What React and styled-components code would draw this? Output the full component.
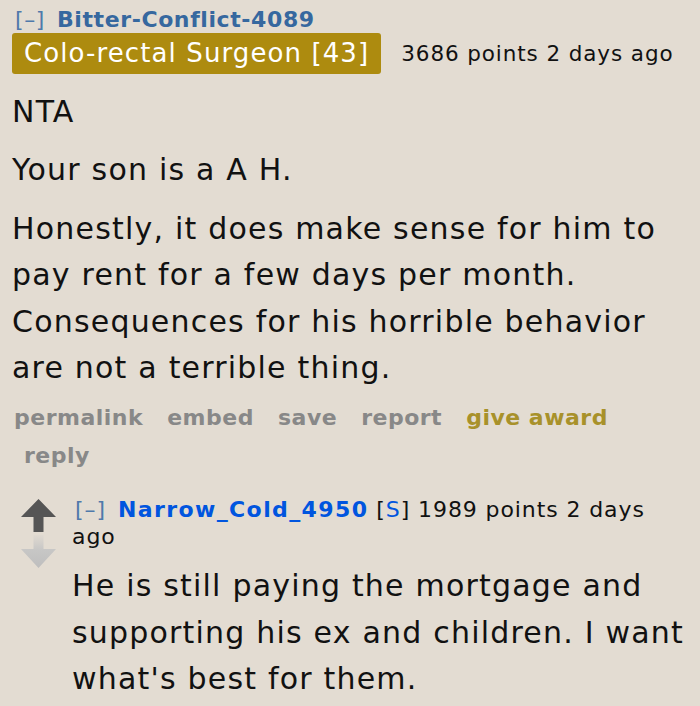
import React from 'react';
import styled, { createGlobalStyle } from 'styled-components';

const GlobalStyle = createGlobalStyle`
  body {
    margin: 0;
    background: #e3dcd2;
    font-family: "DejaVu Sans", Verdana, sans-serif;
    color: #111;
  }
`;

const Page = styled.div`
  width: 700px;
  height: 706px;
  overflow: hidden;
  padding: 7px 0 0 12px;
  box-sizing: border-box;
`;

const Tagline = styled.div`
  font-size: 22px;
  line-height: 26px;
  letter-spacing: 0.6px;
`;

const Expand = styled.span`
  color: #4f79ab;
  font-weight: normal;
  margin: 0 12px 0 3px;
`;

const Author = styled.span`
  font-weight: bold;
  color: ${(p) => (p.$submitter ? '#0055df' : '#36689f')};
  letter-spacing: ${(p) => (p.$submitter ? '1.4px' : '0.6px')};
`;

const FlairRow = styled.div`
  display: flex;
  align-items: center;
  gap: 20px;
`;

const Flair = styled.span`
  background: #ad8b0f;
  color: #fff;
  font-size: 26px;
  line-height: 41px;
  letter-spacing: 1.1px;
  padding: 0 12px;
  border-radius: 3px;
`;

const Meta = styled.span`
  font-size: 21.5px;
  letter-spacing: 0.9px;
  color: #111;
`;

const Body = styled.div`
  margin-top: 15px;
`;

const Para = styled.p`
  margin: 0 0 12px;
  font-size: 30px;
  line-height: 46.4px;
  letter-spacing: 1.2px;

  &:last-child {
    margin-bottom: 0;
  }
`;

const Buttons = styled.ul`
  list-style: none;
  margin: 8px 0 0;
  padding: 0 60px 0 2px;
  display: flex;
  flex-wrap: wrap;
  column-gap: 24px;
  font-size: 22px;
  line-height: 38px;
  font-weight: bold;
  letter-spacing: 0.5px;
`;

const Button = styled.li`
  color: ${(p) => (p.$award ? '#a8912a' : '#888')};
  padding-left: ${(p) => (p.$indent ? '10px' : '0')};
`;

const Child = styled.div`
  display: flex;
  gap: 16px;
  margin-top: 21px;
  margin-left: 9px;
`;

const MidCol = styled.div`
  display: flex;
  flex-direction: column;
  width: 35px;
  padding-top: 3px;
  flex-shrink: 0;
`;

const ChildEntry = styled.div`
  flex: 1;
`;

const ChildTagline = styled.div`
  font-size: 22px;
  line-height: 27px;
  letter-spacing: 0.9px;
  padding-right: 8px;
`;

const Submitter = styled.span`
  color: #0055df;
`;

const Score = styled.span`
  color: #111;
`;

const ChildBody = styled.div`
  margin-top: 13px;
`;

const Arrows = () => (
  <svg width="35" height="70" viewBox="0 0 35 70">
    <defs>
      <linearGradient id="downFade" x1="0" y1="0" x2="0" y2="1">
        <stop offset="0" stopColor="#c4c4c4" stopOpacity="0.1" />
        <stop offset="0.45" stopColor="#c4c4c4" stopOpacity="0.9" />
        <stop offset="1" stopColor="#bebebe" />
      </linearGradient>
    </defs>
    <polygon points="17.5,0 35,18 22.5,18 22.5,33 12.5,33 12.5,18 0,18" fill="#555" />
    <polygon points="12.5,36 22.5,36 22.5,50 35,50 17.5,69 0,50 12.5,50" fill="url(#downFade)" />
  </svg>
);

export default function App() {
  return (
    <Page>
      <GlobalStyle />
      <Tagline>
        <Expand>[–]</Expand>
        <Author>Bitter-Conflict-4089</Author>
      </Tagline>
      <FlairRow>
        <Flair>Colo-rectal Surgeon [43]</Flair>
        <Meta>3686 points 2 days ago</Meta>
      </FlairRow>
      <Body>
        <Para>NTA</Para>
        <Para>Your son is a A H.</Para>
        <Para>
          Honestly, it does make sense for him to pay rent for a few days per month.
          Consequences for his horrible behavior are not a terrible thing.
        </Para>
      </Body>
      <Buttons>
        <Button>permalink</Button>
        <Button>embed</Button>
        <Button>save</Button>
        <Button>report</Button>
        <Button $award>give award</Button>
        <Button $indent>reply</Button>
      </Buttons>
      <Child>
        <MidCol>
          <Arrows />
        </MidCol>
        <ChildEntry>
          <ChildTagline>
            <Expand>[–]</Expand>
            <Author $submitter>Narrow_Cold_4950</Author> <Score>[<Submitter>S</Submitter>]</Score>{' '}
            <Score>1989 points</Score> <Score>2 days</Score> <Score>ago</Score>
          </ChildTagline>
          <ChildBody>
            <Para>
              He is still paying the mortgage and supporting his ex and children. I want
              what's best for them.
            </Para>
          </ChildBody>
        </ChildEntry>
      </Child>
    </Page>
  );
}
